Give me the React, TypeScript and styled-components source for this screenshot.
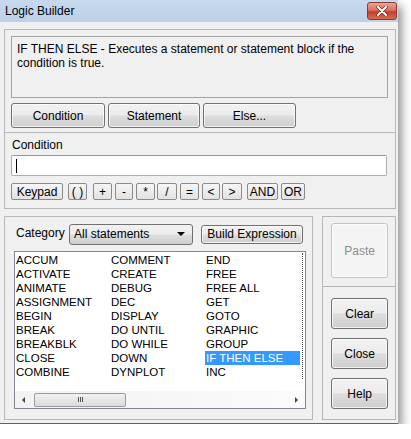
import React from "react";
import styled, { createGlobalStyle } from "styled-components";

const Global = createGlobalStyle`
  html, body { margin: 0; padding: 0; background: #ffffff; }
  body { font-family: "Liberation Sans", Arial, sans-serif; font-size: 12px; color: #000; }
`;

const Win = styled.div`
  width: 398px;
  height: 424px;
  background: #f0f0f0;
  display: flex;
  flex-direction: column;
  box-shadow: 4px 6px 9px rgba(0, 0, 0, 0.42);
  border-bottom: 1px solid #2f7394;
  box-sizing: border-box;
`;

const TitleBar = styled.div`
  height: 22px;
  flex: none;
  display: flex;
  align-items: center;
  justify-content: space-between;
  padding: 0 1px 0 5px;
  background: linear-gradient(#c6d8ec, #bcd2ea);
  font-family: "Liberation Sans", Arial, sans-serif;
  font-size: 12px;
`;

const CloseBtn = styled.div`
  width: 28px;
  height: 16px;
  margin-top: -1px;
  border-radius: 3px;
  border: 1px solid #8a3a33;
  background: linear-gradient(#eaa597 0%, #d9705d 45%, #c73f2a 55%, #d66a50 100%);
  display: flex;
  align-items: center;
  justify-content: center;
`;

const Body = styled.div`
  flex: 1;
  padding: 7px 2px 0 4px;
  display: flex;
  flex-direction: column;
`;

const Group = styled.div<{ $noTop?: boolean }>`
  border: 1px solid #b7b7b7;
  border-top: ${(p) => (p.$noTop ? "none" : "1px solid #b7b7b7")};
  box-sizing: border-box;
`;

const TopGroup = styled(Group)`
  height: 104px;
  padding: 6px 7px 0 6px;
`;

const Desc = styled.div`
  height: 62px;
  box-sizing: border-box;
  border: 1px solid #a3a3a3;
  padding: 5px 5px;
  line-height: 14px;
  font-size: 12px;
`;

const ButtonRow = styled.div`
  display: flex;
  gap: 3px;
  margin-top: 5px;
`;

const Button = styled.div<{ $w: number; $h: number; $disabled?: boolean }>`
  width: ${(p) => p.$w}px;
  height: ${(p) => p.$h}px;
  box-sizing: border-box;
  border: 1px solid ${(p) => (p.$disabled ? "#c4c4c4" : "#707070")};
  border-radius: 3px;
  background: ${(p) =>
    p.$disabled
      ? "#f4f4f4"
      : "linear-gradient(#f2f2f2 0%, #ebebeb 49%, #dddddd 51%, #cfcfcf 100%)"};
  color: ${(p) => (p.$disabled ? "#8d8d8d" : "#000")};
  box-shadow: inset 0 0 0 1px rgba(255, 255, 255, 0.7);
  display: flex;
  align-items: center;
  justify-content: center;
  font-size: 12px;
`;

const CondGroup = styled(Group)`
  height: 76px;
  padding: 5px 8px 0 6px;
`;

const Label = styled.div`
  line-height: 15px;
  margin-left: 1px;
`;

const Input = styled.div`
  height: 21px;
  box-sizing: border-box;
  margin-top: 2px;
  background: #fff;
  border: 1px solid #abadb3;
  border-top-color: #7f9db9;
  border-radius: 2px;
  padding: 2px 4px;
  display: flex;
  align-items: center;
`;

const Caret = styled.div`
  width: 1px;
  height: 14px;
  background: #000;
`;

const KeyRow = styled.div`
  display: flex;
  margin-top: 7px;
`;

const Key = styled.div<{ $w: number; $ml: number }>`
  width: ${(p) => p.$w}px;
  height: 17px;
  margin-left: ${(p) => p.$ml}px;
  box-sizing: border-box;
  border: 1px solid #8a8a8a;
  border-radius: 2px;
  background: linear-gradient(#f6f6f6, #e2e2e2);
  display: flex;
  align-items: center;
  justify-content: center;
  font-size: 12px;
`;

const LowerRow = styled.div`
  display: flex;
  gap: 9px;
  margin-top: 7px;
`;

const LeftGroup = styled(Group)`
  width: 310px;
  height: 204px;
  padding: 6px 0 0 8px;
  display: flex;
  flex-direction: column;
`;

const CatRow = styled.div`
  display: flex;
  align-items: center;
  height: 22px;
`;

const CatLabel = styled.div`
  width: 56px;
  padding-left: 3px;
  box-sizing: border-box;
  margin-top: -2px;
`;

const Select = styled.div`
  width: 124px;
  height: 21px;
  box-sizing: border-box;
  border: 1px solid #707070;
  border-radius: 3px;
  background: linear-gradient(#f2f2f2 0%, #ebebeb 49%, #dddddd 51%, #cfcfcf 100%);
  display: flex;
  align-items: center;
  justify-content: space-between;
  padding: 0 7px 0 4px;
  margin-right: 8px;
`;

const Arrow = styled.div`
  width: 0;
  height: 0;
  border-left: 4px solid transparent;
  border-right: 4px solid transparent;
  border-top: 4px solid #000;
`;

const ListBox = styled.div`
  width: 292px;
  height: 158px;
  margin-top: 6px;
  margin-left: 1px;
  box-sizing: border-box;
  border: 1px solid #828790;
  background: #fff;
  display: flex;
  flex-direction: column;
  overflow: hidden;
`;

const Items = styled.div`
  display: grid;
  grid-auto-flow: column;
  grid-template-rows: repeat(9, 14px);
  grid-auto-columns: 95px;
  padding-top: 1px;
  font-size: 11.5px;
`;

const Item = styled.div<{ $sel?: boolean }>`
  line-height: 14px;
  padding-left: 1px;
  white-space: nowrap;
  background: ${(p) => (p.$sel ? "#3399ff" : "transparent")};
  color: ${(p) => (p.$sel ? "#fff" : "#000")};
`;

const FocusEdge = styled.div`
  grid-row: 1 / -1;
  grid-column: 4;
  margin-left: 2px;
  border-left: 1px dotted #444;
`;

const ScrollBar = styled.div`
  margin-top: auto;
  height: 17px;
  display: flex;
  align-items: center;
  background: linear-gradient(90deg, #f3f3f3, #fbfbfb);
`;

const ArrowBox = styled.div`
  width: 17px;
  height: 17px;
  display: flex;
  align-items: center;
  justify-content: center;
`;

const Tri = styled.div<{ $right?: boolean }>`
  width: 0;
  height: 0;
  border-top: 3px solid transparent;
  border-bottom: 3px solid transparent;
  ${(p) => (p.$right ? "border-left: 3px solid #444;" : "border-right: 3px solid #444;")}
`;

const Thumb = styled.div`
  width: 92px;
  height: 14px;
  margin-left: 2px;
  box-sizing: border-box;
  border: 1px solid #9a9a9a;
  border-radius: 2px;
  background: linear-gradient(#f1f1f1, #dcdcdc);
  display: flex;
  align-items: center;
  justify-content: center;
  gap: 1px;
`;

const Grip = styled.div`
  width: 1px;
  height: 5px;
  background: #555;
`;

const Spacer = styled.div`
  flex: 1;
`;

const RightCol = styled.div`
  width: 74px;
  display: flex;
  flex-direction: column;
`;

const PasteGroup = styled(Group)`
  height: 71px;
  padding: 6px 0 0 8px;
`;

const ActionGroup = styled(Group)`
  height: 133px;
  padding: 11px 0 0 8px;
  display: flex;
  flex-direction: column;
  gap: 9px;
`;

const col1 = ["ACCUM", "ACTIVATE", "ANIMATE", "ASSIGNMENT", "BEGIN", "BREAK", "BREAKBLK", "CLOSE", "COMBINE"];
const col2 = ["COMMENT", "CREATE", "DEBUG", "DEC", "DISPLAY", "DO UNTIL", "DO WHILE", "DOWN", "DYNPLOT"];
const col3 = ["END", "FREE", "FREE ALL", "GET", "GOTO", "GRAPHIC", "GROUP", "IF THEN ELSE", "INC"];

const keys: [string, number, number][] = [
  ["Keypad", 52, 0],
  ["( )", 19, 5],
  ["+", 19, 6],
  ["-", 18, 3],
  ["*", 19, 3],
  ["/", 20, 2],
  ["=", 19, 3],
  ["<", 18, 3],
  [">", 20, 2],
  ["AND", 31, 5],
  ["OR", 24, 3],
];

export default function App() {
  return (
    <>
      <Global />
      <Win>
        <TitleBar>
          <span>Logic Builder</span>
          <CloseBtn>
            <svg width="12" height="10" viewBox="0 0 12 10">
              <path d="M2 1 L10 9 M10 1 L2 9" stroke="#6b2a22" strokeWidth="3.4" strokeLinecap="round" />
              <path d="M2 1 L10 9 M10 1 L2 9" stroke="#ffffff" strokeWidth="2" strokeLinecap="round" />
            </svg>
          </CloseBtn>
        </TitleBar>
        <Body>
          <TopGroup>
            <Desc>IF THEN ELSE - Executes a statement or statement block if the condition is true.</Desc>
            <ButtonRow>
              <Button $w={94} $h={25}>Condition</Button>
              <Button $w={92} $h={25}>Statement</Button>
              <Button $w={93} $h={25}>Else...</Button>
            </ButtonRow>
          </TopGroup>
          <CondGroup $noTop>
            <Label>Condition</Label>
            <Input>
              <Caret />
            </Input>
            <KeyRow>
              {keys.map(([t, w, ml]) => (
                <Key key={t} $w={w} $ml={ml}>
                  {t}
                </Key>
              ))}
            </KeyRow>
          </CondGroup>
          <LowerRow>
            <LeftGroup>
              <CatRow>
                <CatLabel>Category</CatLabel>
                <Select>
                  <span>All statements</span>
                  <Arrow />
                </Select>
                <Button $w={102} $h={19}>Build Expression</Button>
              </CatRow>
              <ListBox>
                <Items>
                  {col1.map((t) => (
                    <Item key={t}>{t}</Item>
                  ))}
                  {col2.map((t) => (
                    <Item key={t}>{t}</Item>
                  ))}
                  {col3.map((t) => (
                    <Item key={t} $sel={t === "IF THEN ELSE"}>
                      {t}
                    </Item>
                  ))}
                  <FocusEdge />
                </Items>
                <ScrollBar>
                  <ArrowBox>
                    <Tri />
                  </ArrowBox>
                  <Thumb>
                    <Grip />
                    <Grip />
                    <Grip />
                  </Thumb>
                  <Spacer />
                  <ArrowBox>
                    <Tri $right />
                  </ArrowBox>
                </ScrollBar>
              </ListBox>
            </LeftGroup>
            <RightCol>
              <PasteGroup>
                <Button $w={57} $h={55} $disabled>
                  Paste
                </Button>
              </PasteGroup>
              <ActionGroup $noTop>
                <Button $w={57} $h={31}>Clear</Button>
                <Button $w={57} $h={31}>Close</Button>
                <Button $w={57} $h={31}>Help</Button>
              </ActionGroup>
            </RightCol>
          </LowerRow>
        </Body>
      </Win>
    </>
  );
}
